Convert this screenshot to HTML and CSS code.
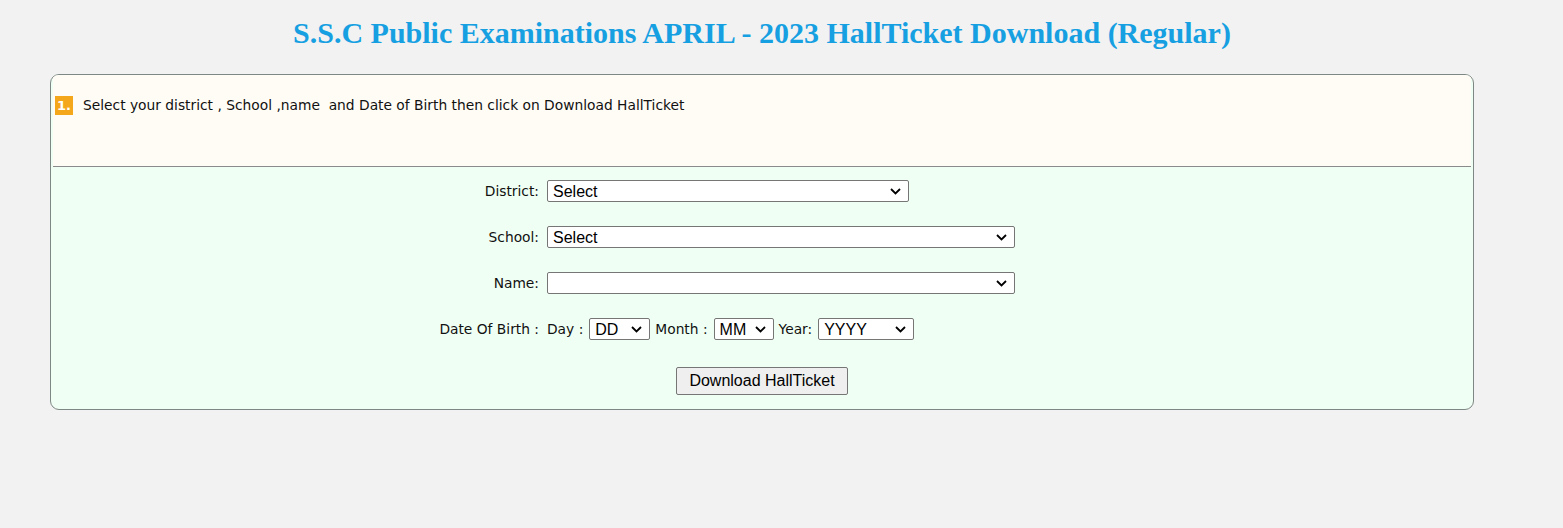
FILE: index.html
```html
<!DOCTYPE html>
<html>
<head>
    <meta charset="UTF-8">
    <title>SSC HallTicket Download</title>
    <link rel="stylesheet" href="styles.css">
</head>
<body>
    <div class="page">
        <h1 class="title">S.S.C Public Examinations APRIL - 2023 HallTicket Download (Regular)</h1>
        <div class="panel">
            <div class="panel-head">
                <span class="step">1.</span>
                <span class="hint">Select your district , School ,name&nbsp; and Date of Birth then click on Download HallTicket</span>
            </div>
            <div class="panel-body">
                <div class="form">
                    <label class="lbl">District:</label>
                    <div class="fld">
                        <select class="sel district"><option>Select</option></select>
                    </div>

                    <label class="lbl">School:</label>
                    <div class="fld">
                        <select class="sel wide"><option>Select</option></select>
                    </div>

                    <label class="lbl">Name:</label>
                    <div class="fld">
                        <select class="sel wide"><option></option></select>
                    </div>

                    <label class="lbl">Date Of Birth :</label>
                    <div class="fld dob">
                        <span>Day :</span>
                        <select class="sel day"><option>DD</option></select>
                        <span>Month :</span>
                        <select class="sel month"><option>MM</option></select>
                        <span>Year:</span>
                        <select class="sel year"><option>YYYY</option></select>
                    </div>
                </div>
                <div class="actions">
                    <button class="btn" type="button">Download HallTicket</button>
                </div>
            </div>
        </div>
    </div>
</body>
</html>
```

FILE: styles.css
```css
body {
    margin: 0;
    background-color: #f2f2f2;
    font-family: "DejaVu Sans", Verdana, sans-serif;
}
.page {
    width: 1508px;
    padding: 0 0 0 8px;
}
.title {
    margin: 0;
    padding-top: 16px;
    height: 74px;
    box-sizing: border-box;
    text-align: center;
    font-family: "Liberation Serif", "Times New Roman", serif;
    font-size: 30px;
    font-weight: bold;
    color: #16a0e2;
}
.panel {
    margin: 0 42px;
    border: 1px solid #7d8783;
    border-radius: 9px;
    overflow: hidden;
    background-color: #f0fff4;
}
.panel-head {
    background-color: #fffcf5;
    height: 92px;
    padding: 21px 4px 0 2px;
    box-sizing: border-box;
    border-bottom: 1px solid #8a8a8a;
    margin: 0 2px;
    display: flex;
    align-items: flex-start;
    gap: 10px;
}
.step {
    background-color: #f5a71c;
    color: #fff;
    font-weight: bold;
    font-size: 13px;
    padding: 1px 2px;
    line-height: 17px;
}
.hint {
    font-size: 13.8px;
    color: #111;
    line-height: 19px;
}
.panel-body {
    padding: 13px 0 14px;
}
.form {
    display: grid;
    grid-template-columns: 488px auto;
    column-gap: 8px;
    row-gap: 24px;
    align-items: center;
}
.lbl {
    text-align: right;
    font-size: 13.8px;
    color: #111;
}
.fld {
    display: flex;
    align-items: center;
}
.dob {
    gap: 5px;
    font-size: 13.8px;
    color: #111;
}
.dob .sel {
    margin-left: 1px;
}
.sel {
    appearance: none;
    -webkit-appearance: none;
    font-family: "Liberation Sans", Arial, sans-serif;
    font-size: 16px;
    height: 22px;
    padding: 0 20px 0 5px;
    border: 1px solid #767676;
    border-radius: 2px;
    background-color: #fff;
    background-image: url("data:image/svg+xml;utf8,<svg xmlns='http://www.w3.org/2000/svg' width='11' height='7' viewBox='0 0 11 7'><path d='M1 1 L5.5 5.5 L10 1' fill='none' stroke='black' stroke-width='1.8'/></svg>");
    background-repeat: no-repeat;
    background-position: right 7px center;
    color: #000;
}
.district { width: 362px; }
.wide { width: 468px; }
.day { width: 61px; }
.month { width: 60px; }
.year { width: 96px; }
.actions {
    text-align: center;
    margin-top: 27px;
}
.btn {
    font-family: "Liberation Sans", Arial, sans-serif;
    font-size: 16px;
    width: 172px;
    height: 28px;
    background-color: #efefef;
    border: 1px solid #767676;
    border-radius: 2px;
    color: #000;
}
```
